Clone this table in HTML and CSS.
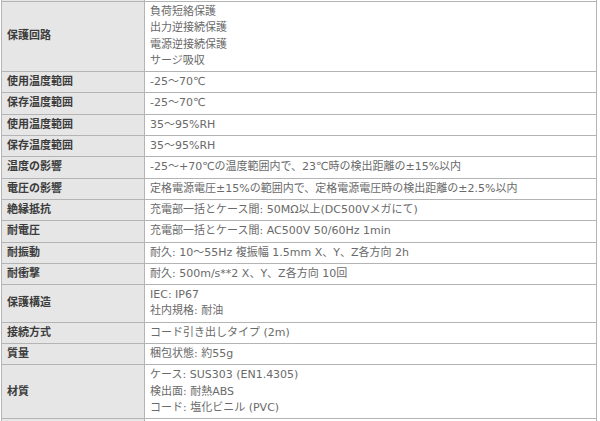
FILE: index.html
```html
<!DOCTYPE html>
<html lang="ja">
<head>
<meta charset="utf-8">
<link rel="stylesheet" href="styles.css">
</head>
<body>
<table class="spec">
<colgroup><col class="col-head"><col class="col-val"></colgroup>
<tbody>
<tr class="cut"><th></th><td></td></tr>
<tr><th>保護回路</th><td>負荷短絡保護<br>出力逆接続保護<br>電源逆接続保護<br>サージ吸収</td></tr>
<tr><th>使用温度範囲</th><td>-25～70℃</td></tr>
<tr><th>保存温度範囲</th><td>-25～70℃</td></tr>
<tr><th>使用温度範囲</th><td>35～95%RH</td></tr>
<tr><th>保存温度範囲</th><td>35～95%RH</td></tr>
<tr><th>温度の影響</th><td>-25～+70℃の温度範囲内で、23℃時の検出距離の±15%以内</td></tr>
<tr><th>電圧の影響</th><td>定格電源電圧±15%の範囲内で、定格電源電圧時の検出距離の±2.5%以内</td></tr>
<tr><th>絶縁抵抗</th><td>充電部一括とケース間: 50MΩ以上(DC500Vメガにて)</td></tr>
<tr><th>耐電圧</th><td>充電部一括とケース間: AC500V 50/60Hz 1min</td></tr>
<tr><th>耐振動</th><td>耐久: 10～55Hz 複振幅 1.5mm X、Y、Z各方向 2h</td></tr>
<tr><th>耐衝撃</th><td>耐久: 500m/s**2 X、Y、Z各方向 10回</td></tr>
<tr><th>保護構造</th><td>IEC: IP67<br>社内規格: 耐油</td></tr>
<tr><th>接続方式</th><td>コード引き出しタイプ (2m)</td></tr>
<tr><th>質量</th><td>梱包状態: 約55g</td></tr>
<tr><th>材質</th><td>ケース: SUS303 (EN1.4305)<br>検出面: 耐熱ABS<br>コード: 塩化ビニル (PVC)</td></tr>
<tr><th>&nbsp;</th><td>&nbsp;</td></tr>
</tbody>
</table>
</body>
</html>
```
FILE: styles.css
```css
html, body {
  margin: 0;
  padding: 0;
  background: #ffffff;
}
body {
  padding-left: 1px;
  font-family: "DejaVu Sans", "Noto Sans CJK JP", sans-serif;
  font-size: 11px;
}
.spec {
  border-collapse: collapse;
  width: 596px;
  table-layout: fixed;
}
.col-head {
  width: 143px;
}
.spec th, .spec td {
  border: 1px solid #b4b4b4;
  padding: 2px 5px;
  line-height: 16.3px;
  text-align: left;
  vertical-align: middle;
}
.spec th {
  background: #e6e6e6;
  color: #3c3c3c;
  font-weight: bold;
}
.spec td {
  background: #ffffff;
  color: #6a6a6a;
}
.spec tr.cut th, .spec tr.cut td {
  padding: 0;
  height: 1px;
  line-height: 1px;
  border-top: none;
}
```
